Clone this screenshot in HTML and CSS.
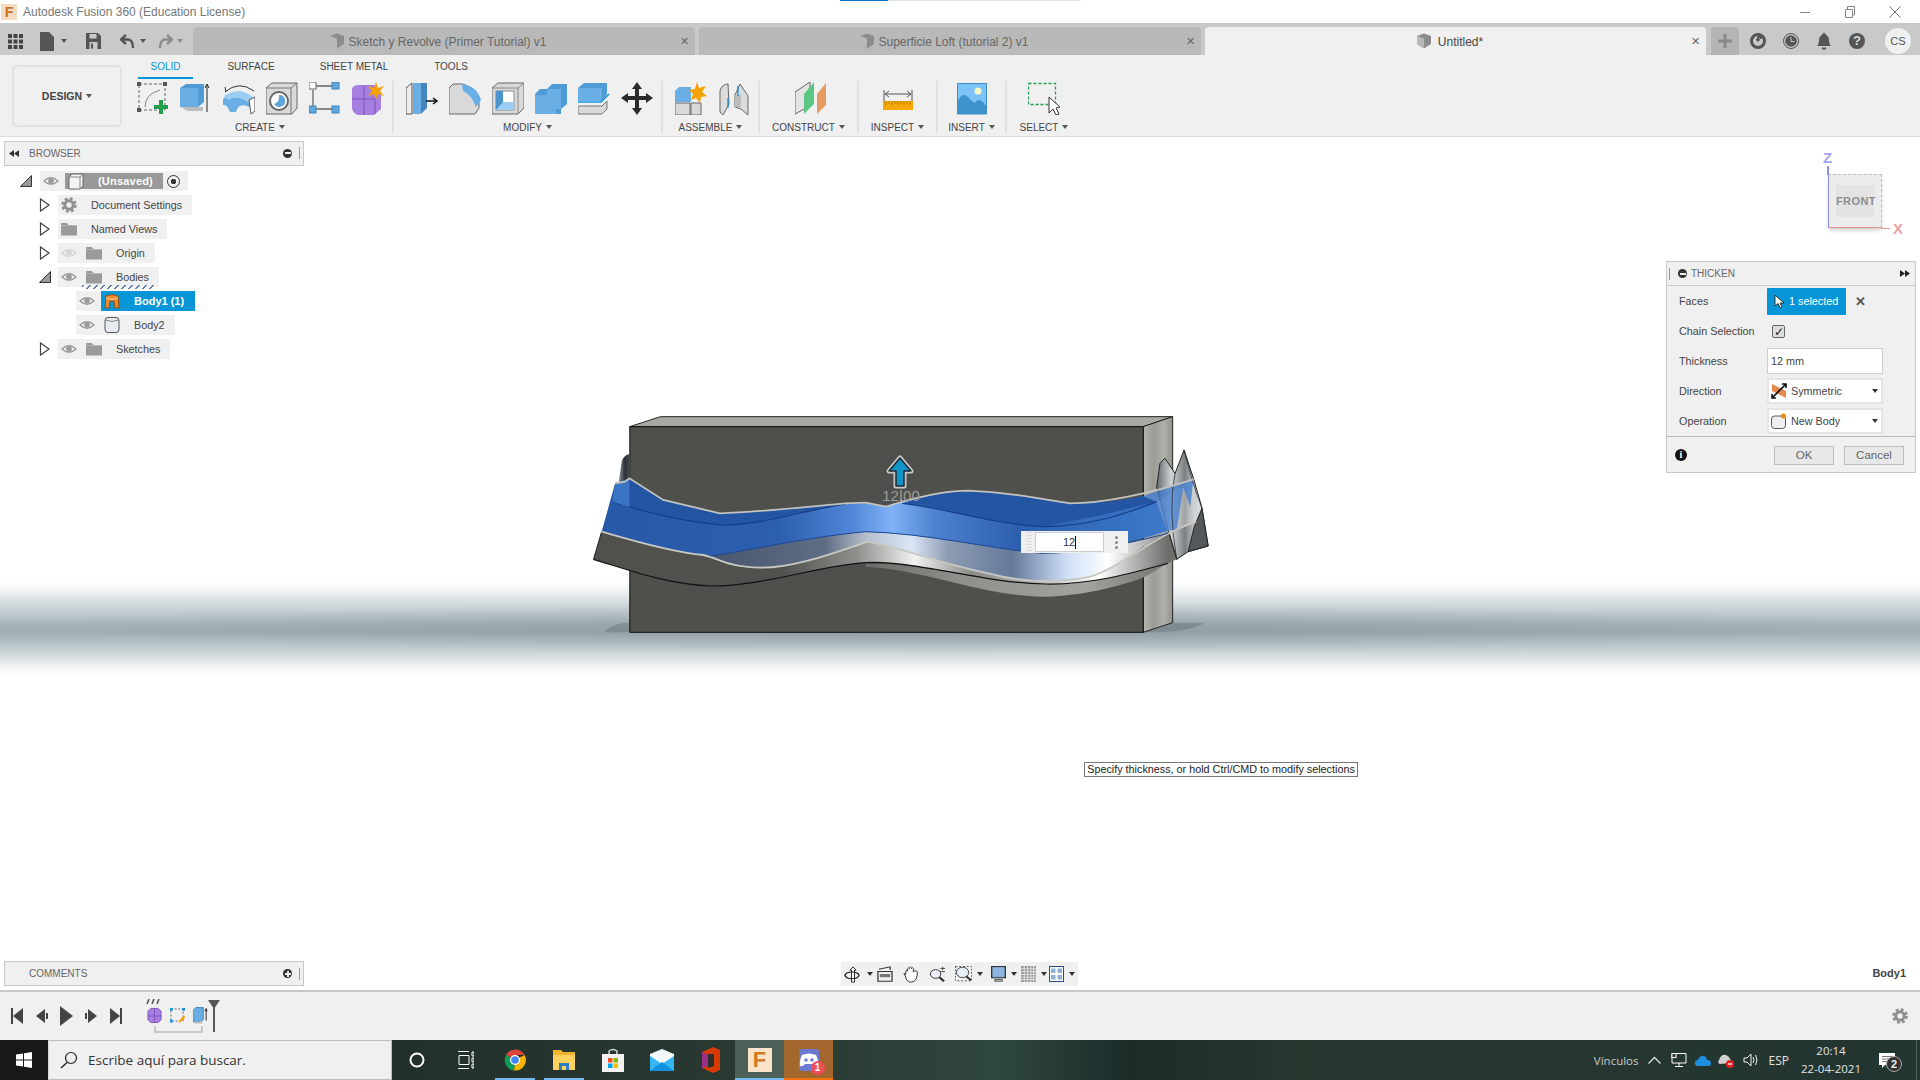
FILE: index.html
```html
<!DOCTYPE html>
<html lang="es">
<head>
<meta charset="utf-8">
<title>Autodesk Fusion 360 (Education License)</title>
<link rel="stylesheet" href="styles.css">
</head>
<body>
<svg class="defs" width="0" height="0" aria-hidden="true">
  <symbol id="eye" viewBox="0 0 16 16"><path d="M1 8Q8 1.500 15 8Q8 14.500 1 8Z" fill="none" stroke="#9a9a9a" stroke-width="1.400"/><circle cx="8" cy="8" r="2.800" fill="#9a9a9a"/></symbol>
  <symbol id="folder" viewBox="0 0 16 16"><path d="M0 2H6L7.500 4H16V14.500H0Z" fill="#9a9a9a"/><path d="M0 4.500H16" stroke="#c4c4c4" stroke-width=".7"/></symbol>
  <symbol id="doc" viewBox="0 0 16 16"><path d="M8 .5L15 3V11L8 15.500L1 11V3Z" fill="#8c8c8c"/><path d="M1 3L8 5.500V15.500L1 11Z" fill="#b9b9b9"/></symbol>
  <symbol id="gear" viewBox="0 0 16 16"><circle cx="8" cy="8" r="4.200" fill="none" stroke="#8f8f8f" stroke-width="3"/><circle cx="8" cy="8" r="6.500" fill="none" stroke="#8f8f8f" stroke-width="2.600" stroke-dasharray="2.800 2.300"/></symbol>
  <symbol id="open" viewBox="0 0 12 16"><path d="M1.500 2L10 8L1.500 14Z" fill="#fff" stroke="#444" stroke-width="1.200"/></symbol>
  <symbol id="shut" viewBox="0 0 12 12"><path d="M.5 11.500L11.500 .5V11.500Z" fill="#999" stroke="#333"/></symbol>
  <symbol id="dblleft" viewBox="0 0 10 7"><path d="M5 0V7L0 3.500ZM10 0V7L5 3.500Z" fill="#333"/></symbol>
  <symbol id="dblright" viewBox="0 0 10 7"><path d="M0 0V7L5 3.500ZM5 0V7L10 3.500Z" fill="#222"/></symbol>
</svg>

<header class="titlebar">
  <span class="progress"></span>
  <span class="appicon">F</span>
  <span class="apptitle">Autodesk Fusion 360 (Education License)</span>
  <div class="winctl">
    <svg width="12" height="12" viewBox="0 0 12 12"><path d="M1 6.500H11" stroke="#888"/></svg>
    <svg width="12" height="12" viewBox="0 0 12 12"><path d="M1.500 3.500H8.500V11.500H1.500ZM3.500 3.500V.5H10.500V9H8.500" fill="none" stroke="#888"/></svg>
    <svg width="12" height="12" viewBox="0 0 12 12"><path d="M.5 .5L11.500 11.500M11.500 .5L.5 11.500" stroke="#777"/></svg>
  </div>
</header>

<nav class="tabbar">
  <div class="quick">
    <svg class="q-grid" width="15" height="15" viewBox="0 0 15 15"><g fill="#444"><rect width="4" height="4"/><rect x="5.500" width="4" height="4"/><rect x="11" width="4" height="4"/><rect y="5.500" width="4" height="4"/><rect x="5.500" y="5.500" width="4" height="4"/><rect x="11" y="5.500" width="4" height="4"/><rect y="11" width="4" height="4"/><rect x="5.500" y="11" width="4" height="4"/><rect x="11" y="11" width="4" height="4"/></g></svg>
    <svg class="q-file" width="14" height="19" viewBox="0 0 14 19"><path d="M0 0H9L14 5V19H0Z" fill="#555"/></svg>
    <span class="caret q-c1"></span>
    <svg class="q-save" width="15" height="16" viewBox="0 0 15 16"><path d="M0 0H12L15 3V16H0Z" fill="#555"/><rect x="3.500" y="1" width="7" height="4.500" fill="#c9c9c9"/><rect x="3.500" y="9" width="8" height="7" fill="#c9c9c9"/><rect x="5" y="10.500" width="2" height="5" fill="#555"/></svg>
    <svg class="q-undo" width="15" height="15" viewBox="0 0 15 15"><path d="M6 1L1 5.500L6 10M2 5.500H8Q13 6 13 14" fill="none" stroke="#555" stroke-width="2.400"/></svg>
    <span class="caret q-c2"></span>
    <svg class="q-redo" width="15" height="15" viewBox="0 0 15 15"><path d="M9 1L14 5.500L9 10M13 5.500H7Q2 6 2 14" fill="none" stroke="#8c8c8c" stroke-width="2.400"/></svg>
    <span class="caret dim q-c3"></span>
  </div>
  <div class="tab"><svg width="16" height="16" class="tabdoc"><use href="#doc"/></svg><span class="tabname">Sketch y Revolve (Primer Tutorial) v1</span><span class="tabx">✕</span></div>
  <div class="tab"><svg width="16" height="16" class="tabdoc"><use href="#doc"/></svg><span class="tabname">Superficie Loft (tutorial 2) v1</span><span class="tabx">✕</span></div>
  <div class="tab active"><svg width="16" height="16" class="tabdoc"><use href="#doc"/></svg><span class="tabname">Untitled*</span><span class="tabx">✕</span></div>
  <div class="plus"><svg width="14" height="14" viewBox="0 0 14 14"><path d="M7 0V14M0 7H14" stroke="#8a8a8a" stroke-width="3"/></svg></div>
  <div class="right-tools">
    <svg width="16" height="16" viewBox="0 0 16 16"><circle cx="8" cy="8" r="6.500" fill="none" stroke="#555" stroke-width="3"/><path d="M9 0L13 4L8 9L6 7Z" fill="#555"/><path d="M9 5L11 7" stroke="#c9c9c9"/></svg>
    <svg width="16" height="16" viewBox="0 0 16 16"><circle cx="8" cy="8" r="7.500" fill="none" stroke="#555"/><circle cx="8" cy="8" r="5.800" fill="#555"/><path d="M8 4V8.500H11.500" fill="none" stroke="#c9c9c9"/></svg>
    <svg width="16" height="17" viewBox="0 0 16 17"><path d="M8 0Q10 0 10 2Q13 3 13 8Q13 11 15 13H1Q3 11 3 8Q3 3 6 2Q6 0 8 0Z" fill="#555"/><rect x="6" y="14.500" width="4" height="2" fill="#555"/></svg>
    <span class="help">?</span>
    <span class="avatar">CS</span>
  </div>
</nav>

<section class="ribbon">
  <button class="design">DESIGN<span class="caret"></span></button>
  <div class="ribbon-main">
    <div class="modes">
      <span class="mode on m1">SOLID</span>
      <span class="mode m2">SURFACE</span>
      <span class="mode m3">SHEET METAL</span>
      <span class="mode m4">TOOLS</span>
    </div>
    <div class="groups">
      <div class="group g-create">
        <div class="tools">
          <svg class="ri" viewBox="0 0 32 33"><rect x="2" y="2" width="26" height="26" fill="none" stroke="#666" stroke-dasharray="3 2"/><g fill="#555"><rect x="0" y="0" width="4" height="4"/><rect x="26" y="0" width="4" height="4"/><rect x="0" y="26" width="4" height="4"/></g><path d="M8 25Q8 12 23 8" fill="none" stroke="#888"/><path d="M24 18V32M17 25H31" stroke="#21a04b" stroke-width="4"/></svg>
          <svg class="ri" viewBox="0 0 32 33"><path d="M1 25L7 29H23L23 25Z" fill="#bdbdbd"/><path d="M0 6L6 2H24V20L18 25H0Z" fill="#4f9bd8"/><path d="M0 6H18V25H0Z" fill="#69afe6"/><path d="M27 30V3M25 6L27 2L29 6" fill="none" stroke="#222"/></svg>
          <svg class="ri" viewBox="0 0 32 33"><path d="M2 10Q16 -2 31 9" fill="none" stroke="#333"/><path d="M3 10L2 5" stroke="#333"/><path d="M0 17Q16 2 30 17V27Q16 18 13 30H7Q4 22 0 23Z" fill="#69afe6"/><path d="M1 14Q16 4 30 15L27 22Q16 12 5 18Z" fill="#9ccdf2"/><path d="M26 18L32 15V29L28 32Z" fill="#fff" stroke="#555"/></svg>
          <svg class="ri" viewBox="0 0 32 33"><path d="M0 6L6 1H31V26L26 32H0Z" fill="#d9d9d9" stroke="#666"/><path d="M0 6H25V32M25 6L31 1" fill="none" stroke="#777"/><circle cx="13" cy="19" r="9" fill="#fff" stroke="#666" stroke-width="2"/><path d="M13 13A6 6 0 1 1 8 22Q14 20 13 13Z" fill="#5ea6dd"/></svg>
          <svg class="ri" viewBox="0 0 32 33"><path d="M7 4H23M4 8V24M7 27H23" stroke="#666" stroke-width="1.300"/><rect x="0" y="0" width="7" height="7" fill="#fff" stroke="#666"/><rect x="23" y="0" width="7" height="7" fill="#5ea6dd" stroke="#3e86bd"/><rect x="0" y="24" width="7" height="7" fill="#5ea6dd" stroke="#3e86bd"/><rect x="23" y="24" width="7" height="7" fill="#5ea6dd" stroke="#3e86bd"/></svg>
          <svg class="ri" viewBox="0 0 32 33"><path d="M0 8Q0 3 7 3H22L29 10V27L22 33H6Q0 31 0 25Z" fill="#a67fe0"/><path d="M0 17H24M12 4V33M23 10V32" stroke="#7d55bb"/><path d="M24 0L26 6L32 4L28 9L32 14L26 12L24 18L22 12L16 14L20 9L16 4L22 6Z" fill="#f5a200"/></svg>
        </div>
        <div class="glabel">CREATE<span class="caret"></span></div>
      </div>
      <div class="group g-modify">
        <div class="tools">
          <svg class="ri" viewBox="0 0 32 33"><path d="M0 6L6 1V32H0Z" fill="#eee" stroke="#555"/><path d="M7 1H19L19 26L14 32H7Z" fill="#69afe6"/><path d="M15 1H21V26L15 32Z" fill="#4685bb"/><path d="M20 19H30M27 16L31 19L27 22" fill="none" stroke="#111" stroke-width="1.500"/></svg>
          <svg class="ri" viewBox="0 0 32 33"><path d="M0 6L4 2H14Q26 6 30 18V26L26 32H0Z" fill="#d9d9d9" stroke="#666"/><path d="M13 2Q28 4 32 18L27 25Q22 12 14 9Z" fill="#69afe6"/></svg>
          <svg class="ri" viewBox="0 0 32 33"><path d="M0 6L6 1H32V26L26 32H0Z" fill="#d9d9d9" stroke="#666"/><path d="M0 6H26V32M26 6L32 1" fill="none" stroke="#888"/><rect x="4" y="9" width="18" height="19" fill="#fff" stroke="#888"/><path d="M4 9H11V20H22V28H4Z" fill="#4a93cc"/><path d="M11 20H22V28H4Z" fill="#9ccdf2"/></svg>
          <svg class="ri" viewBox="0 0 32 33"><path d="M12 7L17 2H32V22L26 27V32H0V12L5 7Z" fill="#4f9bd8"/><path d="M12 7H26V27H12Z" fill="#69afe6"/><path d="M0 13H21V32H0Z" fill="#69afe6"/></svg>
          <svg class="ri" viewBox="0 0 32 33"><path d="M0 6L6 1H29V12L24 19H0Z" fill="#4f9bd8"/><path d="M0 6H24V19H0Z" fill="#69afe6"/><path d="M0 20H23L31 12" fill="none" stroke="#1996e0" stroke-width="1.600"/><path d="M0 24H24L29 19V27L24 32H0Z" fill="#d9d9d9" stroke="#777"/></svg>
          <svg class="ri" viewBox="0 0 32 33"><path d="M16 0L21 7H18V14H25V11L32 16L25 21V18H18V26H21L16 33L11 26H14V18H7V21L0 16L7 11V14H14V7H11Z" fill="#2a2a2a"/></svg>
        </div>
        <div class="glabel">MODIFY<span class="caret"></span></div>
      </div>
      <div class="group g-assemble">
        <div class="tools">
          <svg class="ri" viewBox="0 0 32 33"><path d="M0 21H15V33H0ZM16 21H26V33H16Z" fill="#d9d9d9" stroke="#666"/><path d="M0 9L4 5H16L16 20H0Z" fill="#69afe6"/><path d="M22 0L24 6L31 4L27 10L32 14L26 15L25 21L21 16L16 18L18 12L14 8L20 7Z" fill="#f5a200"/></svg>
          <svg class="ri" viewBox="0 0 30 33"><path d="M1 30L1 9Q3 2 9 2L10 22L4 33Z" fill="#dcdcdc" stroke="#666"/><path d="M16 25L16 13L21 2L29 14V33L22 27Z" fill="#dcdcdc" stroke="#666"/><rect x="16" y="13" width="6" height="12" fill="#bbb"/><path d="M19 4V14M9 16V26" stroke="#1b88d0" stroke-width="1.300"/></svg>
        </div>
        <div class="glabel">ASSEMBLE<span class="caret"></span></div>
      </div>
      <div class="group g-construct">
        <div class="tools">
          <svg class="ri" viewBox="0 0 32 33"><path d="M0 10L15 0V24L0 32Z" fill="#e4e4e4" stroke="#666"/><path d="M9 32V12L19 0V22Z" fill="#5cc784"/><path d="M22 32V12L31 1V23Z" fill="#e59a63"/></svg>
        </div>
        <div class="glabel">CONSTRUCT<span class="caret"></span></div>
      </div>
      <div class="group g-inspect">
        <div class="tools">
          <svg class="ri" viewBox="0 0 30 33"><path d="M1 8V22M29 8V22M2 12H28" fill="none" stroke="#555"/><path d="M6 9L2 12L6 15M24 9L28 12L24 15" fill="none" stroke="#555"/><rect y="19" width="30" height="9" fill="#f5a800"/><path d="M3 19V23M6 19V22M9 19V23M12 19V22M15 19V23M18 19V22M21 19V23M24 19V22M27 19V23" stroke="#a36f00" stroke-width=".8"/></svg>
        </div>
        <div class="glabel">INSPECT<span class="caret"></span></div>
      </div>
      <div class="group g-insert">
        <div class="tools">
          <svg class="ri" viewBox="0 0 30 33"><rect x=".5" y=".5" width="29" height="29" transform="translate(0 1) scale(1 1.050)" fill="#7cc4f7" stroke="#3e8fc9"/><circle cx="21" cy="9" r="3.500" fill="#f8f6c8"/><path d="M1 32V19Q6 9 12 16Q15 20 18 21Q22 14 29 24V32Z" fill="#3f93cd"/></svg>
        </div>
        <div class="glabel">INSERT<span class="caret"></span></div>
      </div>
      <div class="group g-select">
        <div class="tools">
          <svg class="ri" viewBox="0 0 32 33"><rect x=".5" y="1.500" width="27" height="21" fill="none" stroke="#21a04b" stroke-width="1.300" stroke-dasharray="3 2"/><path d="M21 15V31L25 27L28 33L31 32L28 26L32 25Z" fill="#fff" stroke="#333"/></svg>
        </div>
        <div class="glabel">SELECT<span class="caret"></span></div>
      </div>
    </div>
  </div>
</section>

<main class="viewport">
  <svg class="model" viewBox="580 400 640 240" width="640" height="240">
    <defs>
      <linearGradient id="side" x1="0" x2="1" y1="0" y2="0"><stop offset="0" stop-color="#b6b6b0"/><stop offset=".35" stop-color="#9c9c97"/><stop offset=".7" stop-color="#b0b0aa"/><stop offset="1" stop-color="#94948f"/></linearGradient>
      <linearGradient id="blue" gradientUnits="userSpaceOnUse" x1="50" x2="1510" y1="0" y2="0"><stop offset="0" stop-color="#2858a8"/><stop offset=".3" stop-color="#2c5fae"/><stop offset=".42" stop-color="#4f86d5"/><stop offset=".49" stop-color="#80b2f8"/><stop offset=".56" stop-color="#4d82cd"/><stop offset=".7" stop-color="#2c60af"/><stop offset=".92" stop-color="#3a75c6"/><stop offset="1" stop-color="#4a82d0"/></linearGradient>
      <linearGradient id="strip" gradientUnits="userSpaceOnUse" x1="320" x2="1440" y1="0" y2="0"><stop offset="0" stop-color="#4a5670"/><stop offset=".25" stop-color="#5e6c84"/><stop offset=".34" stop-color="#b6bfcc"/><stop offset=".44" stop-color="#dbe5f5"/><stop offset=".52" stop-color="#8d9cb4"/><stop offset=".66" stop-color="#66799a"/><stop offset=".78" stop-color="#cfdff8"/><stop offset=".87" stop-color="#fff"/><stop offset="1" stop-color="#888"/></linearGradient>
      <linearGradient id="band" gradientUnits="userSpaceOnUse" x1="30" x2="1440" y1="0" y2="0"><stop offset="0" stop-color="#50504c"/><stop offset=".33" stop-color="#50504c"/><stop offset=".46" stop-color="#8f8f8c"/><stop offset=".56" stop-color="#f2f2f2"/><stop offset=".66" stop-color="#8a8a88"/><stop offset=".78" stop-color="#b9b9b8"/><stop offset=".88" stop-color="#fff"/><stop offset="1" stop-color="#6d6d6a"/></linearGradient>
      <linearGradient id="under" gradientUnits="userSpaceOnUse" x1="600" x2="1400" y1="0" y2="0"><stop offset="0" stop-color="#5a5a56"/><stop offset=".4" stop-color="#8e8e8a"/><stop offset=".8" stop-color="#a3a39e"/><stop offset="1" stop-color="#7c7c78"/></linearGradient>
      <linearGradient id="fin" gradientUnits="userSpaceOnUse" x1="1410" x2="1540" y1="0" y2="0"><stop offset="0" stop-color="#5c6266"/><stop offset=".3" stop-color="#d0d4d6"/><stop offset=".55" stop-color="#7c8083"/><stop offset=".8" stop-color="#d8dde0"/><stop offset="1" stop-color="#b9bec2"/></linearGradient>
      <linearGradient id="lfin" x1="0" x2="1" y1="0" y2="0"><stop offset="0" stop-color="#8b9398"/><stop offset=".6" stop-color="#2c3034"/><stop offset="1" stop-color="#40464a"/></linearGradient>
    </defs>
    <g transform="translate(580 400) scale(.40816 .33333)">
      <path d="M60 697Q75 670 122 668V697Z" fill="#6f7d83" opacity=".55"/>
      <path d="M1380 697L1452 668H1530Q1500 695 1400 697Z" fill="#6f7d83" opacity=".6"/>
      <path d="M95 245L103 180Q110 165 120 163V245Z" fill="url(#lfin)"/>
      <path d="M122 80L197 50H1452L1380 80Z" fill="#a9a9a3" stroke="#222" vector-effect="non-scaling-stroke"/>
      <path d="M1380 80L1452 50V668L1380 697Z" fill="url(#side)" stroke="#222" vector-effect="non-scaling-stroke"/>
      <rect x="122" y="80" width="1258" height="617" fill="#4f4f4b" stroke="#111" vector-effect="non-scaling-stroke"/>
      <path d="M1413 260L1421 190L1433 175L1458 220L1480 150L1503 235L1523 320L1539 438L1490 455L1462 478L1441 390Z" fill="url(#fin)" stroke="#222" vector-effect="non-scaling-stroke"/>
      <path d="M1490 455L1505 380L1524 325L1539 438Z" fill="#55585a" stroke="#222" vector-effect="non-scaling-stroke"/>
      <path d="M700 490C850 490 1000 550 1140 552C1250 555 1350 520 1440 490L1385 530C1300 570 1200 590 1130 590C980 585 850 510 700 500Z" fill="url(#under)"/>
      <path d="M53 395C150 430 250 460 302 465C340 475 360 500 440 503C520 505 620 460 705 425C780 440 880 490 1000 520C1080 545 1170 550 1250 530C1330 500 1400 415 1441 395L1462 478L1440 490C1350 520 1250 555 1140 552C1000 550 850 490 720 487C600 490 450 560 320 558C220 555 120 510 33 478Z" fill="url(#band)"/>
      <path d="M33 478C120 510 220 555 320 558C450 560 600 490 720 487C850 490 1000 550 1140 552C1250 555 1350 520 1440 490" fill="none" stroke="#111" stroke-width="1.200" vector-effect="non-scaling-stroke"/>
      <path d="M33 478L53 395M1441 392L1462 478" stroke="#222" vector-effect="non-scaling-stroke"/>
      <path d="M320 468C400 455 560 410 700 395C850 400 1000 445 1130 460C1230 460 1340 432 1440 400C1400 410 1330 500 1250 530C1170 550 1080 545 1000 520C880 490 780 440 705 425C620 460 520 505 440 503C360 500 340 475 320 468Z" fill="url(#strip)"/>
      <path d="M86 250L110 245L121 235L204 300L343 340C420 338 490 328 650 310L700 308L750 320L790 305C850 285 900 272 950 272C1050 278 1100 290 1200 310C1260 310 1320 305 1380 288L1413 305L1441 392C1340 432 1230 460 1130 460C1000 445 850 400 700 395C560 410 400 455 320 468L302 465C250 460 150 430 53 395Z" fill="url(#blue)"/>
      <path d="M121 235L204 300L343 340C420 338 490 328 650 310L790 310C850 285 900 272 950 272C1050 278 1100 290 1200 310C1260 310 1320 305 1380 288L1413 305L1280 345L1130 380C1000 370 900 325 790 310L650 312C550 330 450 375 350 375C250 365 170 340 80 305Z" fill="#2455a3"/>
      <path d="M80 305C170 340 250 365 350 375C450 375 550 330 650 312M790 310C900 325 1000 370 1130 380C1250 380 1340 340 1413 305" fill="none" stroke="#173e86" stroke-width="1.200" vector-effect="non-scaling-stroke"/>
      <path d="M86 250L121 235V322L80 305Z" fill="#3f78c9" opacity=".9"/>
      <path d="M1413 305L1503 238L1510 365L1441 395Z" fill="#fff" opacity=".28"/>
      <path d="M1380 288L1503 238L1495 320L1478 262L1462 390L1441 392L1413 305Z" fill="#3a78d0" opacity=".72"/>
      <path d="M1458 220Q1440 320 1462 478M1480 150Q1500 250 1524 325" fill="none" stroke="#222" vector-effect="non-scaling-stroke" opacity=".7"/>
      <path d="M86 250L110 245L121 235L204 300L343 340C420 338 490 328 650 310L700 308L750 320L790 305C850 285 900 272 950 272C1050 278 1100 290 1200 310C1280 310 1400 280 1503 238" fill="none" stroke="#c3c3be" stroke-width="1.800" vector-effect="non-scaling-stroke"/>
      <path d="M53 395C150 430 250 460 302 465C340 475 360 500 440 503C520 505 620 460 705 425C780 440 880 490 1000 520C1080 545 1170 550 1250 530C1330 500 1400 410 1510 365" fill="none" stroke="#c8c8c3" stroke-width="1.800" vector-effect="non-scaling-stroke"/>
      <path d="M320 468C400 455 560 410 700 395C850 400 1000 445 1130 460C1230 460 1340 432 1440 400" fill="none" stroke="#1c4a96" vector-effect="non-scaling-stroke"/>
    </g>
    <text class="dim-text" x="901" y="501">12.00</text>
    <path d="M901 490V503" stroke="#bbb"/>
    <path class="arrow-halo" d="M900 458L889 471H896V486H904V471H911Z"/>
    <path class="arrow" d="M900 458L889 471H896V486H904V471H911Z"/>
  </svg>

  <div class="browser">
    <div class="panelhead">
      <svg class="dbl" width="10" height="7"><use href="#dblleft"/></svg><span class="panelname">BROWSER</span>
      <span class="pin minus"></span><span class="grip"></span>
    </div>
    <div class="tree">
      <div class="row depth0"><svg class="exp" width="12" height="12"><use href="#shut"/></svg>
        <div class="pill root"><svg class="ic" width="16" height="16"><use href="#eye"/></svg>
          <span class="rootbar"><svg width="16" height="17" viewBox="0 0 16 17"><path d="M1 4L4 1H15V13L12 16H1Z" fill="#f4f4f4" stroke="#666"/><path d="M12 4V16M12 4L15 1M1 4H12" stroke="#888" fill="none"/></svg><b>(Unsaved)</b></span>
          <span class="radio"></span></div></div>
      <div class="row depth1"><svg class="exp2" width="12" height="16"><use href="#open"/></svg>
        <div class="pill"><svg class="ic" width="16" height="16"><use href="#gear"/></svg><span class="name">Document Settings</span></div></div>
      <div class="row depth1"><svg class="exp2" width="12" height="16"><use href="#open"/></svg>
        <div class="pill"><svg class="ic" width="16" height="16"><use href="#folder"/></svg><span class="name">Named Views</span></div></div>
      <div class="row depth1"><svg class="exp2" width="12" height="16"><use href="#open"/></svg>
        <div class="pill"><svg class="ic faint" width="16" height="16"><use href="#eye"/></svg><svg class="ic" width="16" height="16"><use href="#folder"/></svg><span class="name">Origin</span></div></div>
      <div class="row depth1"><svg class="exp3" width="12" height="12"><use href="#shut"/></svg>
        <div class="pill wavy"><svg class="ic" width="16" height="16"><use href="#eye"/></svg><svg class="ic" width="16" height="16"><use href="#folder"/></svg><span class="name">Bodies</span></div></div>
      <div class="row depth2">
        <div class="pill"><svg class="ic" width="16" height="16"><use href="#eye"/></svg>
          <span class="selbar"><svg width="16" height="16" viewBox="0 0 16 16"><path d="M2 3Q8 0 14 3L15 15H11L10 8H6L5 15H1Z" fill="#ef8a2c" stroke="#9a4e0c"/><path d="M2 5Q8 8 14 5" fill="none" stroke="#fcd3a7"/></svg><b>Body1 (1)</b></span></div></div>
      <div class="row depth2">
        <div class="pill"><svg class="ic" width="16" height="16"><use href="#eye"/></svg><svg class="ic" width="16" height="16" viewBox="0 0 16 16"><rect x="1" y=".5" width="14" height="15" rx="3" fill="#e8ecf0" stroke="#555"/><path d="M1 3Q8 6 15 3" fill="none" stroke="#888"/></svg><span class="name n-b">Body2</span></div></div>
      <div class="row depth1"><svg class="exp2" width="12" height="16"><use href="#open"/></svg>
        <div class="pill"><svg class="ic" width="16" height="16"><use href="#eye"/></svg><svg class="ic" width="16" height="16"><use href="#folder"/></svg><span class="name">Sketches</span></div></div>
    </div>
  </div>

  <div class="navcube">
    <span class="axis-z">Z</span><span class="axis-x">X</span>
    <div class="cube"><span>FRONT</span></div>
  </div>

  <aside class="thicken">
    <div class="dlg-head"><span class="grip g2"></span><span class="pin minus small"></span><span class="dlg-title">THICKEN</span><svg class="dlg-arrows" width="10" height="7"><use href="#dblright"/></svg></div>
    <div class="dlg-body">
      <label>Faces</label>
      <div class="val"><span class="selected"><svg width="11" height="15" viewBox="0 0 11 15"><path d="M1 1V12L4 9.500L6 14L8 13L6 9H10Z" fill="#fff" stroke="#333"/></svg>1 selected</span><span class="clear">✕</span></div>
      <label>Chain Selection</label>
      <div class="val"><span class="check">✓</span></div>
      <label>Thickness</label>
      <div class="val"><span class="input">12 mm</span></div>
      <label>Direction</label>
      <div class="val"><span class="select"><svg width="16" height="16" viewBox="0 0 16 16"><path d="M1 1L15 8V15L1 8Z" fill="#e8894c"/><path d="M1 15L15 1M11 1H15V5M1 11V15H5" fill="none" stroke="#111" stroke-width="1.600"/></svg>Symmetric<i></i></span></div>
      <label>Operation</label>
      <div class="val"><span class="select"><svg width="16" height="16" viewBox="0 0 16 16"><rect x=".5" y="3" width="14" height="12.500" rx="3" fill="#eee" stroke="#555"/><circle cx="12.500" cy="3" r="2.500" fill="#f08a00"/></svg>New Body<i></i></span></div>
    </div>
    <div class="dlg-foot"><span class="info">i</span><button class="btn ok">OK</button><button class="btn">Cancel</button></div>
  </aside>

  <div class="inline-input"><span class="inline-grip"></span><span class="inline-field">12<span class="cursor"></span></span><span class="kebab"><i></i><i></i><i></i></span></div>
  <div class="tooltip">Specify thickness, or hold Ctrl/CMD to modify selections</div>

  <div class="comments">
    <span class="panelname">COMMENTS</span>
    <span class="pin plusc"></span><span class="grip"></span>
  </div>

  <div class="navbar">
    <svg width="18" height="17" viewBox="0 0 18 20" preserveAspectRatio="none"><path d="M9 1L12 5H10.500V19H7.500V5H6Z" fill="#fff" stroke="#222"/><ellipse cx="8" cy="11" rx="7" ry="4" fill="none" stroke="#222" stroke-width="1.300"/><path d="M1 11L3 14" stroke="#222"/></svg><span class="caret dark"></span>
    <svg class="nb" width="16" height="16" viewBox="0 0 17 20" preserveAspectRatio="none"><path d="M2 4L14 1V5M1 7H16V19H1Z" fill="none" stroke="#333" stroke-width="1.300"/><rect x="3" y="10" width="11" height="4" fill="#777"/></svg>
    <svg class="nb2" width="16" height="17" viewBox="0 0 17 20" preserveAspectRatio="none"><path d="M3 10V6Q4 4 5 6V3Q6 1 7 3V2Q8 0 9 2V3Q10 1 11 3V7Q12 5 14 6Q16 6 15 11Q14 19 8 19Q3 18 3 13L1 9Q1 8 3 10Z" fill="#fff" stroke="#222"/></svg>
    <svg class="nb2" width="16" height="16" viewBox="0 0 17 20" preserveAspectRatio="none"><circle cx="7" cy="10" r="5.500" fill="#eef" stroke="#222"/><path d="M11 14L16 19" stroke="#333" stroke-width="2.400"/><path d="M12 3H17M14.500 1V5M12 7H17" stroke="#333" fill="none"/></svg>
    <svg class="nb2" width="17" height="16" viewBox="0 0 18 20" preserveAspectRatio="none"><rect x=".5" y=".5" width="17" height="18" fill="none" stroke="#444" stroke-dasharray="2 2"/><circle cx="8" cy="8" r="6.500" fill="#e8eef5" stroke="#333"/><path d="M12 13L17 18" stroke="#333" stroke-width="2.400"/></svg><span class="caret dark"></span>
    <svg class="nb3" width="15" height="16" viewBox="0 0 16 20" preserveAspectRatio="none"><rect x=".7" y=".7" width="14.600" height="14" fill="#8db4e0" stroke="#333" stroke-width="1.400"/><path d="M4 17H12V19H4Z" fill="#fff" stroke="#333"/></svg><span class="caret dark"></span>
    <svg class="nb5" width="15" height="16" viewBox="0 0 16 20" preserveAspectRatio="none"><rect width="16" height="20" fill="#999"/><path d="M3.500 0V20M7 0V20M10.500 0V20M13.500 0V20M0 3.500H16M0 7H16M0 10.500H16M0 14H16M0 17H16" stroke="#e8e8e8"/></svg><span class="caret dark"></span>
    <svg class="nb6" width="15" height="16" viewBox="0 0 15 16"><rect x=".5" y=".5" width="14" height="15" fill="#fff" stroke="#25507f"/><path d="M2 2.500H6.500V7H2ZM8.500 2.500H13V7H8.500ZM2 9H6.500V13.500H2ZM8.500 9H13V13.500H8.500Z" fill="#8fb0d8"/></svg><span class="caret dark"></span>
  </div>
  <div class="activebody">Body1</div>
</main>

<section class="timeline">
  <div class="playback">
    <svg width="13" height="16" viewBox="0 0 13 16"><path d="M1 0H3V16H1ZM13 0V16L3 8Z" fill="#444"/></svg>
    <svg width="13" height="16" viewBox="0 0 13 16"><path d="M10 1V15L1 8ZM11 5H13V11H11Z" fill="#444"/></svg>
    <svg width="13" height="20" viewBox="0 0 13 20"><path d="M0 0L13 10L0 20Z" fill="#444"/></svg>
    <svg width="13" height="16" viewBox="0 0 13 16"><path d="M3 1V15L12 8ZM0 5H2V11H0Z" fill="#444"/></svg>
    <svg width="13" height="16" viewBox="0 0 13 16"><path d="M0 0V16L10 8ZM10 0H12V16H10Z" fill="#444"/></svg>
  </div>
  <div class="history">
    <svg class="hatch" width="16" height="5" viewBox="0 0 16 5"><path d="M1 5L3 0M6 5L8 0M11 5L13 0" stroke="#555" stroke-width="1.600"/></svg>
    <div class="hist-items">
      <svg width="15" height="17" viewBox="0 0 16 17"><path d="M1 4L4 1H12L15 4V13L12 16H4L1 13Z" fill="#a67fe0" stroke="#7d55bb"/><path d="M1 9H15M8 1V16" stroke="#7d55bb"/></svg>
      <svg width="15" height="17" viewBox="0 0 16 17"><rect x="1" y="1.500" width="13" height="13" fill="none" stroke="#555" stroke-dasharray="2 2"/><rect y=".5" width="3" height="3" fill="#1996e0"/><rect x="13" y=".5" width="3" height="3" fill="#1996e0"/><rect y="13" width="3" height="3" fill="#1996e0"/><path d="M9 15L15 8L16 11L11 16Z" fill="#f5a200"/></svg>
      <svg width="15" height="17" viewBox="0 0 16 17"><path d="M0 15V3L3 0H11V13L8 15Z" fill="#69afe6" stroke="#3e86bd"/><path d="M1 16H10" stroke="#bbb" stroke-width="2"/><path d="M14 14V2M13 4L14 1L15 4" fill="none" stroke="#222"/></svg>
    </div>
    <div class="bracket"></div>
    <span class="marker"></span>
  </div>
  <svg class="tl-gear" width="16" height="16"><use href="#gear"/></svg>
</section>

<footer class="taskbar">
  <div class="start"><svg width="16" height="16" viewBox="0 0 16 16"><path d="M0 2.500L7 1.500V7.500H0ZM8 1.300L16 0V7.500H8ZM0 8.500H7V14.500L0 13.500ZM8 8.500H16V16L8 14.700Z" fill="#fff"/></svg></div>
  <div class="search"><svg width="18" height="18" viewBox="0 0 18 18"><circle cx="11" cy="7" r="5.500" fill="none" stroke="#222" stroke-width="1.200"/><path d="M7 11.500L1 17" stroke="#222" stroke-width="1.400"/></svg><span>Escribe aquí para buscar.</span></div>
  <div class="slot"><svg width="16" height="16" viewBox="0 0 16 16"><circle cx="8" cy="8" r="6.500" fill="none" stroke="#fff" stroke-width="2"/></svg></div>
  <div class="slot"><svg width="16" height="18" viewBox="0 0 16 18"><path d="M0 .5H11M0 17.500H11M1 4.500H11V13.500H1ZM14 1H16V5H14ZM14 7H16V11H14ZM14 13H16V17H14Z" fill="none" stroke="#fff"/></svg></div>
  <div class="slot run"><svg width="22" height="22" viewBox="0 0 22 22"><path d="M11 11L2 6A10.500 10.500 0 0 1 20.500 6H11Z" fill="#db4437"/><path d="M11 11L20.500 6A10.500 10.500 0 0 1 10 21.500Z" fill="#f4b400"/><path d="M11 11L10 21.500A10.500 10.500 0 0 1 2 6Z" fill="#0f9d58"/><circle cx="11" cy="11" r="5" fill="#fff"/><circle cx="11" cy="11" r="3.800" fill="#4285f4"/></svg></div>
  <div class="slot run"><svg width="22" height="20" viewBox="0 0 22 20"><path d="M0 0H8L10 2H22V20H0Z" fill="#f0b42c"/><path d="M0 5H22V20H0Z" fill="#ffd25e"/><path d="M6 20V13H16V20H13V16H9V20Z" fill="#2c7fc6"/></svg></div>
  <div class="slot"><svg width="24" height="24" viewBox="0 0 24 24"><path d="M8 7V3Q12 0 16 3V7" fill="none" stroke="#ddd" stroke-width="1.400"/><path d="M1 6H23V24H1Z" fill="#f2f2f2"/><rect x="7" y="10" width="4.500" height="4.500" fill="#f25022"/><rect x="12.500" y="10" width="4.500" height="4.500" fill="#7fba00"/><rect x="7" y="15.500" width="4.500" height="4.500" fill="#00a4ef"/><rect x="12.500" y="15.500" width="4.500" height="4.500" fill="#ffb900"/></svg></div>
  <div class="slot"><svg width="24" height="22" viewBox="0 0 24 22"><path d="M12 0L24 7H0Z" fill="#0f6cbd"/><path d="M0 7H24V22H0Z" fill="#34b6f4"/><path d="M0 7L12 15L24 7V5L12 0L0 5Z" fill="#fff" opacity=".95"/><path d="M0 22L12 13L24 22Z" fill="#1490df"/></svg></div>
  <div class="slot"><svg width="18" height="26" viewBox="0 0 18 26"><path d="M0 5L11 0L18 3V23L11 26L0 21Z" fill="#d83b01"/><path d="M0 5L6 8V19L0 21Z" fill="#9b2f88"/><path d="M6 7H12V19L6 21Z" fill="#2d2f2b"/></svg></div>
  <div class="slot fusion"><span class="fusion-tile">F</span></div>
  <div class="slot discord"><span class="discord-tile"><svg width="20" height="14" viewBox="0 0 20 14"><path d="M3 2Q10 -1 17 2Q20 8 19 13Q16 14 14 11H6Q4 14 1 13Q0 8 3 2Z" fill="#fff"/><circle cx="7" cy="7" r="1.800" fill="#6a7ad0"/><circle cx="13" cy="7" r="1.800" fill="#6a7ad0"/></svg><span class="badge">1</span></span></div>
  <div class="tray">
    <span class="links">Vínculos</span>
    <svg class="t1" width="13" height="8" viewBox="0 0 13 8"><path d="M.5 7.500L6.500 1.500L12.500 7.500" fill="none" stroke="#ddd" stroke-width="1.300"/></svg>
    <svg class="t2" width="16" height="14" viewBox="0 0 16 14"><path d="M1 .5H15V10H1ZM8 10V13M4 13.500H12" fill="none" stroke="#fff"/><rect x="1" y=".5" width="4" height="4" fill="#26352f" stroke="#fff"/></svg>
    <svg class="t3" width="16" height="11" viewBox="0 0 16 11"><path d="M3 11Q0 11 0 8Q0 5 3 5Q5 0 9 1Q12 2 12 5Q16 5 16 8Q16 11 13 11Z" fill="#1f8fe0"/></svg>
    <svg class="t4" width="16" height="16" viewBox="0 0 16 16"><path d="M2 12Q-1 11 1 8Q3 2 8 3Q11 4 12 7Q14 8 13 11Z" fill="#d0d0d0"/><circle cx="12" cy="12" r="4" fill="#e01e24"/><path d="M10 12H14" stroke="#fff" stroke-width="1.300"/></svg>
    <svg class="t5" width="16" height="14" viewBox="0 0 16 14"><path d="M1 5H4L8 1V13L4 9H1ZM10 4Q12 7 10 10M12.500 2Q15.500 7 12.500 12" fill="none" stroke="#eee"/></svg>
    <span class="lang">ESP</span>
    <div class="clock"><span>20:14</span><span>22-04-2021</span></div>
    <div class="notify"><svg width="16" height="15" viewBox="0 0 16 15"><path d="M0 0H16V12H6L3 15V12H0Z" fill="#fff"/><path d="M3 3.500H13M3 6H13M3 8.500H9" stroke="#777"/></svg><span class="ncount">2</span></div>
    <span class="showdesk"></span>
  </div>
</footer>
</body>
</html>
```
FILE: styles.css
```css
* { box-sizing: border-box; }
html, body { margin: 0; height: 100%; }
body {
  width: 1920px; height: 1080px; overflow: hidden;
  display: flex; flex-direction: column;
  background: #fff; color: #444;
  font: 11px "Liberation Sans", Arial, sans-serif;
}
svg { display: block; flex: none; }
.defs { position: absolute; }

.caret { display: inline-block; width: 0; height: 0; border: 3.500px solid transparent; border-top: 4px solid #555; border-bottom: 0; margin-left: 4px; vertical-align: 2px; }
.caret.dim { border-top-color: #8c8c8c; }
.caret.dark { border-top-color: #333; margin-left: 5px; }

/* title bar */
.titlebar { height: 23px; flex: none; display: flex; align-items: center; position: relative; background: #fff; }
.progress { position: absolute; left: 840px; top: 0; width: 241px; height: 1px; background: linear-gradient(90deg, #0078d7 48px, #e4e4e4 48px); }
.appicon { width: 16px; height: 16px; margin-left: 1px; background: #f5dcc0; color: #c9701b; font: bold 14px/16px "Liberation Sans", sans-serif; text-align: center; }
.apptitle { margin-left: 6px; font-size: 12px; color: #777; }
.winctl { margin-left: auto; display: flex; gap: 33px; margin-right: 19px; }

/* document tabs */
.tabbar { height: 32px; flex: none; background: #c9c9c9; display: flex; padding-top: 4px; }
.quick { width: 193px; flex: none; display: flex; align-items: center; }
.q-grid { margin-left: 8px; }
.q-file { margin-left: 17px; }
.q-c1 { margin-left: 7px; }
.q-save { margin-left: 19px; }
.q-undo { margin-left: 19px; }
.q-c2 { margin-left: 5px; }
.q-redo { margin-left: 12px; }
.q-c3 { margin-left: 4px; }
.tab { width: 502px; flex: none; margin-right: 4px; padding-right: 12px; border-radius: 4px 4px 0 0; background: #b9b9b9; display: flex; align-items: center; justify-content: center; gap: 3px; position: relative; font-size: 12px; color: #666; }
.tab.active { background: #f0f0f0; color: #444; width: 501px; margin-right: 5px; gap: 6px; }
.tabdoc { margin-top: -1px; }
.tabname { padding-top: 1px; }
.tabx { position: absolute; right: 6px; top: 7px; font-size: 11px; color: #666; line-height: 14px; }
.plus { width: 28px; flex: none; background: #b4b4b4; border-radius: 4px 4px 0 0; display: flex; align-items: center; justify-content: center; }
.right-tools { display: flex; align-items: center; gap: 17px; margin-left: 11px; }
.help { width: 16px; height: 16px; border-radius: 50%; background: #555; color: #ddd; font: bold 13px/16px "Liberation Sans", sans-serif; text-align: center; }
.avatar { width: 26px; height: 26px; margin-left: 3px; border-radius: 50%; background: #f0f0f0; text-align: center; line-height: 26px; font-size: 11px; color: #555; }

/* ribbon */
.ribbon { height: 82px; flex: none; background: #f0f0f0; border-bottom: 1px solid #dcdcdc; display: flex; align-items: flex-start; }
.design { width: 110px; height: 62px; margin: 10px 0 0 12px; flex: none; background: #f0f0f0; border: 2px solid #e2e2e2; border-radius: 5px; font: bold 10.500px "Liberation Sans", sans-serif; color: #444; }
.ribbon-main { margin-left: 6px; }
.modes { display: flex; height: 24px; padding-left: 10px; }
.mode { height: 24px; line-height: 23px; text-align: center; font-size: 10px; color: #444; }
.mode.on { color: #0696d7; border-bottom: 2px solid #0696d7; }
.m1 { width: 55px; } .m2 { width: 116px; } .m3 { width: 90px; } .m4 { width: 104px; }
.groups { display: flex; margin-top: 2px; }
.group { height: 52px; border-right: 2px solid #e0e0e0; display: flex; flex-direction: column; align-items: center; flex: none; }
.tools { display: flex; gap: 11px; height: 33px; margin-top: 1px; }
.g-modify .tools, .g-assemble .tools, .g-construct .tools { padding-left: 4px; }
.ri { width: 32px; height: 33px; }
.glabel { margin-top: 6px; font-size: 10px; line-height: 13px; color: #444; white-space: nowrap; }
.g-create { width: 266px; } .g-modify { width: 269px; } .g-assemble { width: 97px; } .g-construct { width: 99px; }
.g-inspect { width: 79px; } .g-insert { width: 69px; } .g-select { width: 74px; border-right: 0; }

/* viewport */
.viewport {
  flex: 1; position: relative; overflow: hidden;
  background:
    radial-gradient(900px 26px at 950px 491px, rgba(90,105,112,.28), rgba(90,105,112,0)),
    linear-gradient(#fff 445px, #eef1f2 455px, #cdd5d8 470px, #a6b3b9 488px, #a0adb3 495px, #c4ced1 512px, #edf0f1 528px, #fff 538px);
}
.model { position: absolute; left: 580px; top: 263px; }
.dim-text { font: 15px "Liberation Sans", sans-serif; fill: #9c9c9a; text-anchor: middle; }
.arrow-halo { fill: none; stroke: #c9c9c9; stroke-width: 5; stroke-linejoin: round; }
.arrow { fill: #0f93c8; stroke: #1d2a30; stroke-width: 1.500; stroke-linejoin: round; }

.browser { position: absolute; left: 4px; top: 4px; width: 300px; }
.panelhead, .comments { height: 25px; background: #f0f0f0; border: 1px solid #c8c8c8; display: flex; align-items: center; color: #666; }
.panelhead { padding-bottom: 1px; }
.dbl { margin: 0 10px 0 4px; }
.panelname { font-size: 10px; color: #666; }
.pin { width: 9px; height: 9px; border-radius: 50%; background: #333; position: relative; margin-left: auto; }
.pin::before { content: ""; position: absolute; left: 1.500px; right: 1.500px; top: 3.500px; height: 2px; background: #f0f0f0; }
.plusc::after { content: ""; position: absolute; top: 1.500px; bottom: 1.500px; left: 3.500px; width: 2px; background: #f0f0f0; }
.grip { width: 2px; height: 12px; border-left: 1px solid #999; margin: 0 2px 0 7px; }
.tree { display: flex; flex-direction: column; gap: 4px; padding-top: 5px; font-size: 10.800px; color: #444; }
.row { display: flex; align-items: center; height: 20px; position: relative; }
.depth0 { padding-left: 16px; }
.depth1 { padding-left: 35px; }
.depth2 { padding-left: 72px; }
.exp { margin-right: 8px; }
.exp2, .exp3 { margin-right: 7px; }
.pill { height: 20px; display: flex; align-items: center; background: #f0f0f0; padding: 0 10px 0 3px; gap: 9px; }
.name { margin-left: 5px; }
.ic.faint { opacity: .3; }
.wavy { position: relative; }
.wavy::after { content: ""; position: absolute; left: 24px; right: 3px; bottom: -2px; height: 4px; background: repeating-linear-gradient(135deg, #5d79ad 0 1.500px, transparent 1.500px 5px); }
.root { padding-right: 8px; gap: 6px; }
.rootbar { width: 98px; height: 16px; background: #999; display: flex; align-items: center; color: #fff; padding-left: 3px; }
.rootbar b { margin-left: 14px; font-size: 11px; letter-spacing: .2px; }
.radio { width: 13px; height: 13px; border: 1px solid #333; border-radius: 50%; margin-left: -2px; background: radial-gradient(circle, #333 0 2.500px, #f0f0f0 3px); }
.selbar { height: 20px; width: 94px; margin: 0 -10px 0 -3px; background: #0696d7; color: #fff; display: flex; align-items: center; padding-left: 3px; }
.selbar b { margin-left: 14px; font-size: 11px; }

.navcube { position: absolute; left: 1820px; top: 18px; width: 86px; height: 84px; }
.axis-z { position: absolute; left: 3px; top: -6px; font: bold 15px "Liberation Sans", sans-serif; color: #a3a3ee; }
.axis-x { position: absolute; left: 73px; top: 65px; font: bold 15px "Liberation Sans", sans-serif; color: #f1a0a0; }
.cube { position: absolute; left: 8px; top: 19px; width: 54px; height: 54px; background: #ececec; border-left: 1.500px solid #8d8de6; border-bottom: 1.500px solid #e58f8f; border-top: 1px dashed #bbb; border-right: 1px dashed #bbb; box-shadow: 0 3px 4px -1px rgba(120,120,120,.4); display: flex; align-items: center; justify-content: center; }
.cube::before { content: ""; position: absolute; left: -2px; top: -9px; width: 1.500px; height: 9px; background: #8d8de6; }
.cube::after { content: ""; position: absolute; right: -9px; bottom: -2px; width: 9px; height: 1.500px; background: #e58f8f; }
.cube span { width: 38px; height: 32px; background: #e3e3e3; text-align: center; font: bold 11px/32px "Liberation Sans", sans-serif; color: #8d8d8d; letter-spacing: .4px; }

.thicken { position: absolute; left: 1666px; top: 124px; width: 250px; height: 212px; background: #f0f0f0; border: 1px solid #c8c8c8; font-size: 10.800px; color: #444; }
.dlg-head { height: 24px; border-bottom: 1px solid #c8c8c8; display: flex; align-items: center; padding-right: 5px; }
.g2 { margin: 0 7px 0 2px; }
.small.pin { margin-left: 0; }
.dlg-title { margin-left: 4px; color: #666; font-size: 10px; }
.dlg-arrows { margin-left: auto; }
.dlg-body { display: grid; grid-template-columns: 88px 1fr; grid-auto-rows: 30px; padding-left: 12px; height: 151px; border-bottom: 1px solid #bbb; align-items: center; }
.val { display: flex; align-items: center; }
.selected { width: 79px; height: 27px; background: #0696d7; color: #fff; display: flex; align-items: center; padding-left: 7px; gap: 4px; border-radius: 1px; }
.clear { margin-left: 9px; font-size: 13px; color: #555; font-weight: bold; }
.check { width: 13px; height: 13px; margin-left: 5px; border: 1px solid #666; border-radius: 2px; background: #ddd; font-size: 12px; line-height: 12px; text-align: center; color: #222; }
.input { width: 116px; height: 26px; background: #fff; border: 1px solid #ccc; line-height: 24px; padding-left: 3px; }
.select { width: 116px; height: 26px; background: #fff; border: 2px solid #e4e4e4; display: flex; align-items: center; gap: 4px; padding-left: 2px; position: relative; }
.select i { position: absolute; right: 3px; top: 9px; border: 3.500px solid transparent; border-top: 4px solid #333; border-bottom: 0; }
.dlg-foot { height: 34px; display: flex; align-items: center; padding-top: 2px; }
.info { width: 12px; height: 12px; margin: 0 0 0 8px; border-radius: 50%; background: #111; color: #fff; font: bold 10px/12px "Liberation Serif", serif; text-align: center; }
.btn { width: 60px; height: 19px; padding: 0; background: #e8e8e8; border: 1px solid #bdbdbd; font: 11.500px "Liberation Sans", sans-serif; color: #666; margin-left: 10px; }
.ok { margin-left: 87px; }

.inline-input { position: absolute; left: 1021px; top: 394px; width: 107px; height: 22px; background: #f0f0f0; display: flex; align-items: center; }
.inline-grip { width: 6px; height: 20px; margin-left: 5px; background: repeating-linear-gradient(#ddd 0 1px, transparent 1px 3px); }
.inline-field { width: 69px; height: 20px; margin-left: 3px; background: #fff; border: 1px solid #ccc; text-align: center; line-height: 18px; font-size: 11px; color: #333; }
.cursor { display: inline-block; width: 1px; height: 13px; background: #111; vertical-align: -3px; }
.kebab { margin-left: 11px; display: flex; flex-direction: column; gap: 2px; }
.kebab i { width: 3px; height: 3px; border-radius: 50%; background: #888; }
.tooltip { position: absolute; left: 1084px; top: 625px; width: 274px; height: 15px; border: 1px solid #777; background: #fff; text-align: center; line-height: 13px; font-size: 10.800px; color: #222; white-space: nowrap; }

.comments { position: absolute; left: 4px; top: 824px; width: 300px; padding-left: 24px; }
.navbar { position: absolute; left: 841px; top: 825px; width: 237px; height: 24px; background: #f0f0f0; display: flex; align-items: center; padding-left: 3px; }
.nb { margin-left: 4px; }
.nb2 { margin-left: 10px; }
.nb3 { margin-left: 8px; }
.nb5 { margin-left: 4px; }
.nb6 { margin-left: 2px; }
.activebody { position: absolute; right: 14px; top: 830px; font-weight: bold; font-size: 11px; color: #444; }

/* timeline */
.timeline { height: 50px; flex: none; background: #f0f0f0; border-top: 2px solid #c8c8c8; display: flex; align-items: center; padding-right: 12px; }
.playback { display: flex; align-items: center; gap: 12px; margin-left: 10px; }
.history { position: relative; margin-left: 23px; width: 75px; height: 48px; }
.hatch { position: absolute; left: 0; top: 7px; }
.hist-items { position: absolute; left: 1px; top: 15px; display: flex; gap: 8px; }
.bracket { position: absolute; left: 8px; top: 34px; width: 49px; height: 7px; border: 2px solid #c8c8c8; border-top: 0; }
.marker { position: absolute; left: 67px; top: 9px; width: 2px; height: 31px; background: #555; }
.marker::before { content: ""; position: absolute; left: -5px; top: -1px; border: 6px solid transparent; border-top: 9px solid #555; border-bottom: 0; }
.tl-gear { margin-left: auto; }

/* taskbar */
.taskbar { height: 40px; flex: none; display: flex; align-items: center; background: linear-gradient(90deg, #22302b 0, #21302a 400px, #2b3b34 800px, #2f4640 1000px, #1b2c29 1130px, #27382f 1300px, #233531 1920px); color: #eee; font-family: "Open Sans", "Noto Sans", sans-serif; }
.start { width: 48px; height: 40px; background: #191919; display: flex; align-items: center; justify-content: center; }
.search { width: 344px; height: 40px; background: #f0f0f0; border: 1px solid #bdbdbd; border-left-color: #d8d8d8; display: flex; align-items: center; color: #333; font-size: 13.500px; padding-left: 11px; gap: 10px; }
.slot { width: 49px; height: 40px; display: flex; align-items: center; justify-content: center; flex: none; }
.run { background: linear-gradient(#76b9ed, #76b9ed) bottom center / 40px 2px no-repeat; }
.fusion { background: linear-gradient(#76b9ed, #76b9ed) bottom / 100% 2px no-repeat, #4d6058; }
.discord { background: linear-gradient(#f7720c, #f7720c) bottom / 100% 2px no-repeat, #a3672e; }
.fusion-tile { width: 24px; height: 24px; background: #fae3cb; color: #d27a1c; font: bold 22px/24px "Liberation Sans", sans-serif; text-align: center; }
.discord-tile { width: 20px; height: 22px; background: #6a7ad0; border-radius: 3px; display: flex; align-items: center; position: relative; }
.badge { position: absolute; right: -6px; bottom: -4px; width: 14px; height: 14px; border-radius: 50%; background: #ee4d5a; color: #fff; font: bold 10px/14px "Liberation Sans", sans-serif; text-align: center; }
.tray { margin-left: auto; display: flex; align-items: center; height: 40px; font-size: 12px; color: #e4e4e4; }
.links { color: #ccc; font-size: 11.500px; }
.t1 { margin-left: 9.500px; }
.t2 { margin-left: 9.500px; }
.t3 { margin-left: 8px; }
.t4 { margin-left: 7px; }
.t5 { margin-left: 9px; }
.lang { margin-left: 10px; }
.clock { margin-left: 9px; width: 66px; display: flex; flex-direction: column; align-items: center; line-height: 18px; font-size: 11.500px; white-space: nowrap; }
.notify { position: relative; margin-left: 15px; }
.ncount { position: absolute; left: 7px; top: 3px; width: 16px; height: 16px; border-radius: 50%; background: #333; border: 1px solid #aaa; font: bold 11px/14px "Liberation Sans", sans-serif; text-align: center; color: #eee; }
.showdesk { width: 1px; height: 40px; margin-left: 21px; margin-right: 3px; background: #54635d; }
```
